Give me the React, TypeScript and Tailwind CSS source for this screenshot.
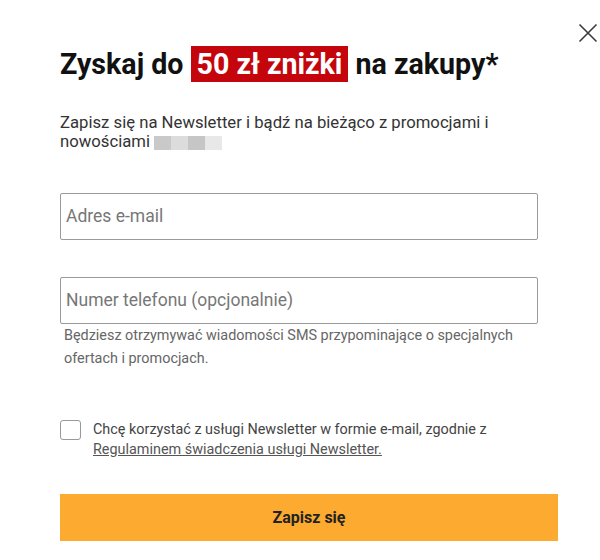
import React from "react";

export default function App() {
  return (
    <div
      className="relative w-[600px] h-[560px] bg-white overflow-hidden"
      style={{ fontFamily: "Roboto, 'Noto Sans', Arial, sans-serif" }}
    >
      <button
        aria-label="Zamknij"
        className="absolute left-[578px] top-[23px] w-[20px] h-[20px] p-0"
      >
        <svg width="20" height="20" viewBox="0 0 20 20" fill="none">
          <path d="M1.5 1.5 L18.5 18.5 M18.5 1.5 L1.5 18.5" stroke="#3a3a3a" strokeWidth="1.6" />
        </svg>
      </button>

      <div className="pl-[60px] pt-[46px] flex flex-col">
        <h1 className="text-[28.6px] leading-[36px] font-bold text-[#111] whitespace-nowrap">
          Zyskaj do{" "}
          <span className="inline-block bg-[#c4060c] text-white px-[6px]">50 zł zniżki</span>{" "}
          na zakupy*
        </h1>

        <p className="mt-[31px] w-[478px] text-[16.7px] leading-[19px] text-[#333]">
          Zapisz się na Newsletter i bądź na bieżąco z promocjami i nowościami{" "}
          <span className="inline-flex align-[-3px] h-[14px]">
            <span className="w-[17px] h-[14px] bg-[#c9c9c9]" />
            <span className="w-[17px] h-[14px] bg-[#dcdcdc]" />
            <span className="w-[17px] h-[14px] bg-[#c6c6c6]" />
            <span className="w-[17px] h-[14px] bg-[#e8e8e8]" />
          </span>
        </p>

        <div className="mt-[42px] w-[478px] h-[47px] border border-[#9a9a9a] rounded-[2px] flex items-center px-[5px]">
          <span className="text-[17.5px] text-[#777]">Adres e-mail</span>
        </div>

        <div className="mt-[37px] w-[478px] h-[47px] border border-[#9a9a9a] rounded-[2px] flex items-center px-[5px]">
          <span className="text-[17.5px] text-[#777]">Numer telefonu (opcjonalnie)</span>
        </div>

        <p className="w-[478px] pl-[4px] text-[14.4px] leading-[23px] text-[#666]">
          Będziesz otrzymywać wiadomości SMS przypominające o specjalnych ofertach i promocjach.
        </p>

        <div className="mt-[50px] flex items-start gap-[12px]">
          <span className="w-[21px] h-[20px] shrink-0 border border-[#999] rounded-[3px] bg-white" />
          <p className="w-[420px] text-[14.4px] leading-[20px] text-[#444]">
            Chcę korzystać z usługi Newsletter w formie e-mail, zgodnie z{" "}
            <span className="underline text-[#555]">Regulaminem świadczenia usługi Newsletter.</span>
          </p>
        </div>

        <button className="mt-[34px] w-[498px] h-[47px] bg-[#fcaa30] flex items-center justify-center">
          <span className="text-[16px] font-bold text-[#222]">Zapisz się</span>
        </button>
      </div>
    </div>
  );
}
